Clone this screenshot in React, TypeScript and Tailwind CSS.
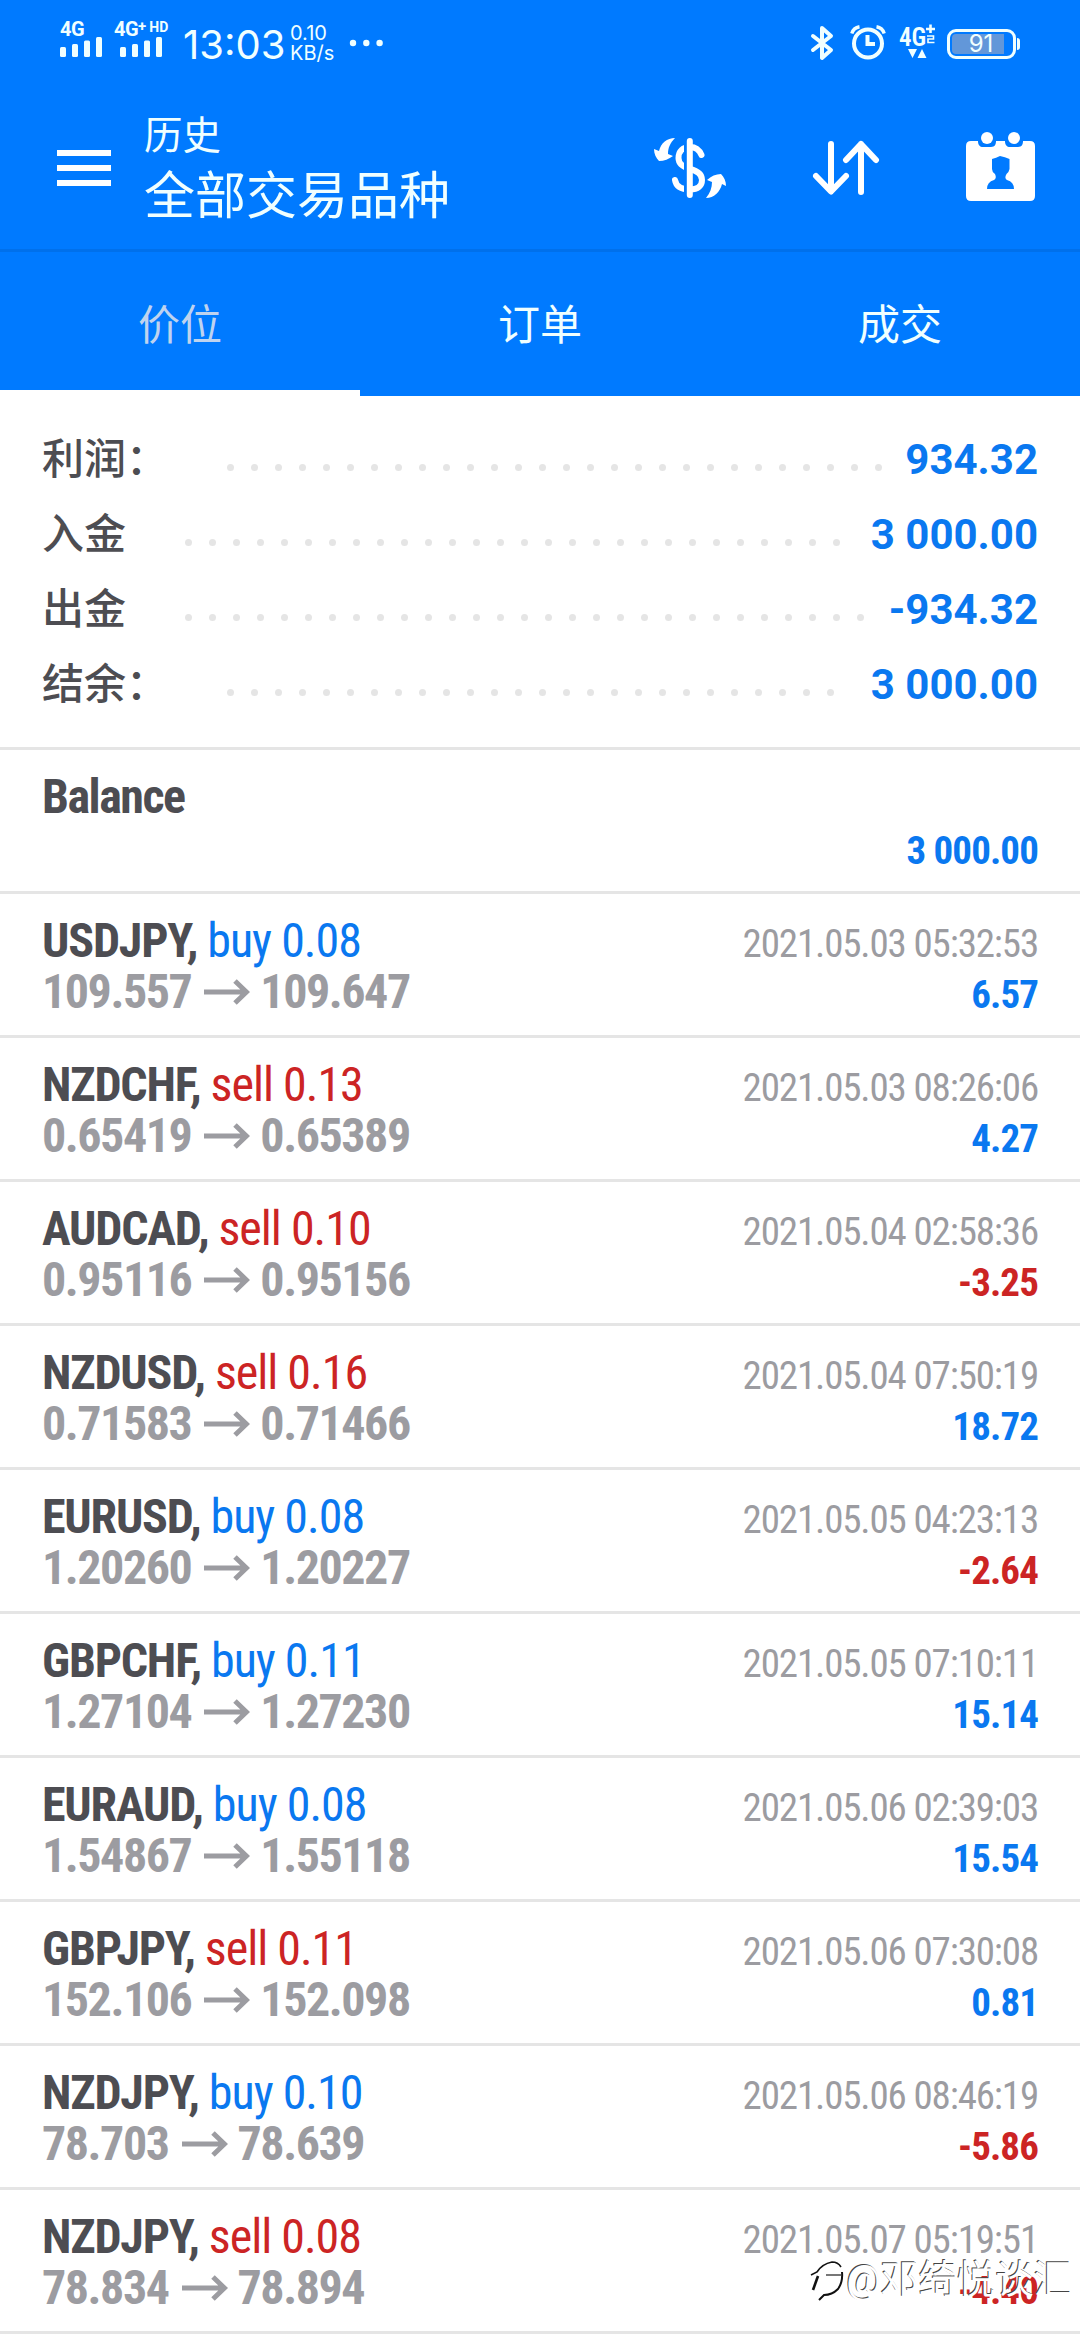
import React from 'react';

interface Deal {
  symbol: string;
  side: 'buy' | 'sell';
  volume: string;
  open: string;
  close: string;
  time: string;
  profit: string;
}

interface SummaryItem {
  label: string;
  value: string;
  dots: number;
}

const SUMMARY: SummaryItem[] = [
  { label: '利润：', value: '934.32', dots: 28 },
  { label: '入金', value: '3 000.00', dots: 28 },
  { label: '出金', value: '-934.32', dots: 29 },
  { label: '结余：', value: '3 000.00', dots: 26 },
];

const DEALS: Deal[] = [
  { symbol: 'USDJPY', side: 'buy', volume: '0.08', open: '109.557', close: '109.647', time: '2021.05.03 05:32:53', profit: '6.57' },
  { symbol: 'NZDCHF', side: 'sell', volume: '0.13', open: '0.65419', close: '0.65389', time: '2021.05.03 08:26:06', profit: '4.27' },
  { symbol: 'AUDCAD', side: 'sell', volume: '0.10', open: '0.95116', close: '0.95156', time: '2021.05.04 02:58:36', profit: '-3.25' },
  { symbol: 'NZDUSD', side: 'sell', volume: '0.16', open: '0.71583', close: '0.71466', time: '2021.05.04 07:50:19', profit: '18.72' },
  { symbol: 'EURUSD', side: 'buy', volume: '0.08', open: '1.20260', close: '1.20227', time: '2021.05.05 04:23:13', profit: '-2.64' },
  { symbol: 'GBPCHF', side: 'buy', volume: '0.11', open: '1.27104', close: '1.27230', time: '2021.05.05 07:10:11', profit: '15.14' },
  { symbol: 'EURAUD', side: 'buy', volume: '0.08', open: '1.54867', close: '1.55118', time: '2021.05.06 02:39:03', profit: '15.54' },
  { symbol: 'GBPJPY', side: 'sell', volume: '0.11', open: '152.106', close: '152.098', time: '2021.05.06 07:30:08', profit: '0.81' },
  { symbol: 'NZDJPY', side: 'buy', volume: '0.10', open: '78.703', close: '78.639', time: '2021.05.06 08:46:19', profit: '-5.86' },
  { symbol: 'NZDJPY', side: 'sell', volume: '0.08', open: '78.834', close: '78.894', time: '2021.05.07 05:19:51', profit: '-4.40' },
];

const TABS = ['价位', '订单', '成交'];

const SignalBars = () => (
  <svg width="42" height="20" viewBox="0 0 42 20" fill="currentColor">
    <rect x="0" y="10" width="6" height="10" rx="1.5" />
    <rect x="12" y="7" width="6" height="13" rx="1.5" />
    <rect x="24" y="3.5" width="6" height="16.5" rx="1.5" />
    <rect x="36" y="0" width="6" height="20" rx="1.5" />
  </svg>
);

const StatusBar = () => (
  <div className="flex h-[84px] items-start pl-[60px] pr-[60px] pt-[20px] font-['Inter',sans-serif] text-[#f0ffff]">
    <div className="flex w-[54px] flex-col">
      <span className="h-[17px] font-['Roboto',sans-serif] text-[20px] font-bold leading-[19px] tracking-[-0.5px]">4G</span>
      <SignalBars />
    </div>
    <div className="flex w-[69px] flex-col">
      <div className="flex h-[17px] font-['Roboto',sans-serif] font-bold">
        <span className="text-[20px] leading-[19px] tracking-[-0.5px]">4G</span>
        <span className="text-[15px] leading-[13px]">+</span>
        <span className="ml-[3px] text-[14px] leading-[14px]">HD</span>
      </div>
      <span className="pl-[6px]"><SignalBars /></span>
    </div>
    <span className="w-[107px] text-[40px] leading-[49px]">13:03</span>
    <div className="mt-[3px] flex w-[59px] flex-col text-[20px] leading-[20px]">
      <span>0.10</span>
      <span>KB/s</span>
    </div>
    <svg className="mt-[19px]" width="34" height="8" viewBox="0 0 34 8" fill="currentColor">
      <circle cx="4" cy="4" r="3.2" />
      <circle cx="17.3" cy="4" r="3.2" />
      <circle cx="30.6" cy="4" r="3.2" />
    </svg>
    <div className="ml-auto flex pt-[4px]">
      <svg className="mt-px" width="24" height="36" viewBox="0 0 24 36" fill="none" stroke="currentColor" strokeWidth="4" strokeLinecap="round" strokeLinejoin="round">
        <path d="M3 11 L21 25 L12 33 V3 L21 11 L3 25" />
      </svg>
      <svg className="ml-[16px] mt-px" width="36" height="36" viewBox="0 0 36 36" fill="none" stroke="currentColor" strokeWidth="4">
        <circle cx="18" cy="18.5" r="14" />
        <path d="M17.5 10 V19 H25" />
        <path d="M1.8 8.5 Q3.5 2.8 9.5 1.8" strokeWidth="3.4" />
        <path d="M34.2 8.5 Q32.5 2.8 26.5 1.8" strokeWidth="3.4" />
      </svg>
      <div className="ml-[13px] w-[48px]">
        <div className="flex h-[23px] font-['Roboto',sans-serif] [font-stretch:75%]">
          <span className="w-[27px] text-[25px] font-semibold leading-[27px]">4G</span>
          <svg width="10" height="20" viewBox="0 0 10 20" fill="none" stroke="currentColor" strokeWidth="2.6">
            <path d="M0 5 H9 M4.5 0.5 V9" />
            <path d="M1 12 H7.5 V15 H2 V18.5 H8.5" strokeWidth="1.6" />
          </svg>
        </div>
        <svg className="ml-[9px] mt-[2px]" width="19" height="10" viewBox="0 0 19 10" fill="currentColor">
          <path d="M0 0 H9 L4.5 9 Z M9.5 9 H18.5 L14 0 Z" />
        </svg>
      </div>
      <div className="mt-[3px] flex items-center">
        <div className="flex h-[30px] w-[69px] rounded-[9px] border-3 border-current p-[2px]">
          <div className="flex h-full w-[52px] items-center justify-center rounded-l-[4px] bg-[#6297d9] text-[24px] leading-none">
            <span className="pl-[6px]">91</span>
          </div>
        </div>
        <div className="ml-px h-[12px] w-[3px] rounded-r-full bg-current"></div>
      </div>
    </div>
  </div>
);

const CurrencyIcon = () => (
  <svg width="90" height="85" viewBox="0 0 90 85" fill="none" strokeLinecap="round">
    <path stroke="white" strokeWidth="6" d="M56.5 30 C54 24 50 22 45 22 C38 22 33.5 26 33.5 33 C33.5 39 38 42 45 44 C53 46 57 49 57 55 C57 61 53 64.5 45 64.5 C36 64.5 31 61 30 55" />
    <path stroke="#007aff" strokeWidth="3" strokeLinecap="butt" d="M40.5 12 V74" />
    <path stroke="white" strokeWidth="6" d="M44.8 16 V70" />
    <path fill="white" d="M30 13 C22 13 16 18 14 26 L9 24 C9 29 11 33 14 36 C19 36 24 34 28 31 L23 29 C23 23 25 18 30 13 Z" />
    <path fill="white" d="M61 73 C69 73 75 67 77 59 L81 61 C81 56 79 52 76 49 C71 49 66 51 62 55 L67 57 C67 63 65 68 61 73 Z" />
  </svg>
);

const SortIcon = () => (
  <svg width="68" height="56" viewBox="0 0 68 56" fill="none" stroke="white" strokeWidth="6" strokeLinecap="round" strokeLinejoin="round">
    <path d="M19 4 V51 M4 36 L19 51.5 L34 36" />
    <path d="M49 52 V4 M34 20 L49 4 L64 20" />
  </svg>
);

const AccountCalendarIcon = () => (
  <svg width="70" height="70" viewBox="0 0 70 70" fill="white">
    <path d="M5 9 H12 C12 13 14 15 17 15 H25 C29 15 30 12 30 9 H39 C39 13 41 15 44 15 H52 C56 15 57 12 57 9 H64 Q69 9 69 14 V64 Q69 69 64 69 H5 Q0 69 0 64 V14 Q0 9 5 9 Z" />
    <circle cx="21" cy="6" r="6" />
    <circle cx="48" cy="6" r="6" />
    <path fill="#007aff" d="M26 27 Q30 26 34 24 Q39 25 43.5 27 V37 Q43 40 40.5 42 Q38 46 41 48 Q48 50 48 57 H21 Q21 50 28 48 Q31 46 29 42 Q26 40 26 37 Z" />
  </svg>
);

const Header = () => (
  <div className="flex h-[165px] items-start pl-[57px] pr-[44px]">
    <div className="mt-[66px] flex w-[54px] flex-col gap-[9px]">
      <div className="h-[6px] bg-white"></div>
      <div className="h-[6px] bg-white"></div>
      <div className="h-[6px] bg-white"></div>
    </div>
    <div className="ml-[33px] mt-[26px] flex flex-col text-[#f0ffff]">
      <span className="text-[38.5px] leading-[52px]">历史</span>
      <span className="text-[51px] leading-[69px]">全部交易品种</span>
    </div>
    <div className="ml-auto flex items-start">
      <div className="mt-[41px]"><CurrencyIcon /></div>
      <div className="ml-[77px] mt-[56px]"><SortIcon /></div>
      <div className="ml-[86px] mt-[48px]"><AccountCalendarIcon /></div>
    </div>
  </div>
);

const TabBar = () => (
  <div className="grid h-[147px] grid-cols-3 border-t-3 border-[#0070eb] text-[42px]">
    {TABS.map((tab, i) => (
      <div
        key={tab}
        className={`flex items-center justify-center border-b-6 pt-[9px] ${
          i === 0 ? 'border-white text-[#bfd3ef]' : 'border-transparent text-[#f0ffff]'
        }`}
      >
        <span className="leading-none">{tab}</span>
      </div>
    ))}
  </div>
);

const Summary = () => (
  <div className="flex h-[351px] flex-col pl-[42px] pr-[42px] pt-[26px]">
    {SUMMARY.map(item => (
      <div key={item.label} className="flex h-[75px] items-center">
        <span className={`text-[42px] font-medium leading-none text-[#4d4d52] ${item.label.length > 2 ? 'w-[176px]' : 'w-[134px]'}`}>
          {item.label}
        </span>
        <div className="mt-[15px] flex">
          {Array.from({ length: item.dots }, (_, i) => (
            <span key={i} className="mx-[8.5px] h-[7px] w-[7px] rounded-full bg-[#e5e5e5]"></span>
          ))}
        </div>
        <span className="ml-auto font-['Roboto',sans-serif] text-[42px] font-bold leading-none text-[#0a78f0]">{item.value}</span>
      </div>
    ))}
  </div>
);

const PriceArrow = () => (
  <svg className="ml-[13px] mr-[10px] mb-[1px] inline-block" width="46" height="26" viewBox="0 0 46 26" fill="none" stroke="#9c9ca1" strokeWidth="5">
    <path d="M0 13 H43 M31 2 L42.5 13 L31 24" />
  </svg>
);

const DealRow: React.FC<{ deal: Deal }> = ({ deal }) => (
  <div className="flex h-[144px] justify-between border-b-3 border-[#e5e5e5] pl-[42px] pr-[42px]">
    <div className="pt-[21px]">
      <p className="h-[51px] text-[48px] leading-[52px] tracking-[-1px]">
        <span className="font-bold tracking-[-1.2px] text-[#4d4d52]">{deal.symbol},</span>{' '}
        <span className={deal.side === 'buy' ? 'text-[#0a78f0]' : 'text-[#cc2424]'}>{deal.side} {deal.volume}</span>
      </p>
      <p className="flex items-center text-[48px] font-bold leading-[52px] tracking-[-1.45px] text-[#9c9ca1]">
        {deal.open}
        <PriceArrow />
        {deal.close}
      </p>
    </div>
    <div className="pt-[24px] text-right text-[39px] leading-[52px]">
      <p className="h-[51px] tracking-[-1.15px] text-[#9c9ca1]">{deal.time}</p>
      <p className={`font-bold tracking-[-0.9px] ${deal.profit.startsWith('-') ? 'text-[#cc2424]' : 'text-[#0a78f0]'}`}>{deal.profit}</p>
    </div>
  </div>
);

const BalanceRow = () => (
  <div className="flex h-[147px] justify-between border-b-3 border-t-3 border-[#e5e5e5] pl-[42px] pr-[42px] font-bold">
    <p className="pt-[21px] text-[48px] leading-[52px] tracking-[-1.5px] text-[#4d4d52]">Balance</p>
    <p className="pt-[75px] text-[39px] leading-[52px] tracking-[-0.9px] text-[#0a78f0]">3 000.00</p>
  </div>
);

const Watermark = () => (
  <div className="absolute bottom-[38px] right-[8px] flex items-center text-white [text-shadow:-1px_-1px_0_#444]">
    <svg width="36" height="44" viewBox="0 0 36 44" fill="none" stroke="#111" strokeWidth="1.6">
      <path d="M1 17 L7 14 Q12 6 22 4 Q28 4 31 9" />
      <path d="M32 14 Q33 24 28 31 Q22 37 14 37 L9 42" strokeWidth="2" />
      <path d="M8 18 L3 32" strokeWidth="2.6" />
      <path d="M16 17 H31" stroke="#555" />
    </svg>
    <span className="text-[38.3px] leading-[44px]">@邓绮悦谈汇</span>
  </div>
);

export default function App() {
  return (
    <div className="relative h-[2340px] w-[1080px] overflow-hidden bg-white font-['Roboto','Noto_Sans_CJK_SC',sans-serif]">
      <div className="bg-[#007aff]">
        <StatusBar />
        <Header />
        <TabBar />
      </div>
      <Summary />
      <div className="font-['Roboto_Condensed','Roboto',sans-serif] [font-stretch:75%]">
        <BalanceRow />
        {DEALS.map(deal => (
          <DealRow key={deal.time} deal={deal} />
        ))}
      </div>
      <Watermark />
    </div>
  );
}
